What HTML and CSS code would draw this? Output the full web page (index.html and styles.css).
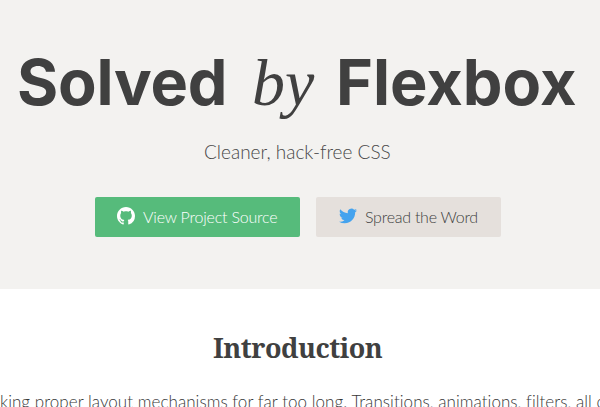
FILE: index.html
```html
<!DOCTYPE html>
<html lang="en">
<head>
<meta charset="utf-8">
<title>Solved by Flexbox</title>
<link rel="stylesheet" href="styles.css">
</head>
<body>
<header class="hero">
  <h1 class="title"><span class="solved">Solved</span><em class="by">by</em><span class="flexbox">Flexbox</span></h1>
  <p class="tagline">Cleaner, hack-free CSS</p>
  <div class="actions">
    <a class="button button-primary"><svg class="icon" viewBox="0 0 16 16" fill="currentColor"><path d="M8 0C3.58 0 0 3.58 0 8c0 3.54 2.29 6.53 5.47 7.59.4.07.55-.17.55-.38 0-.19-.01-.82-.01-1.49-2.01.37-2.53-.49-2.69-.94-.09-.23-.48-.94-.82-1.13-.28-.15-.68-.52-.01-.53.63-.01 1.08.58 1.23.82.72 1.21 1.87.87 2.33.66.07-.52.28-.87.51-1.07-1.78-.2-3.64-.89-3.64-3.95 0-.87.31-1.59.82-2.15-.08-.2-.36-1.02.08-2.12 0 0 .67-.21 2.2.82.64-.18 1.32-.27 2-.27s1.36.09 2 .27c1.53-1.04 2.2-.82 2.2-.82.44 1.1.16 1.92.08 2.12.51.56.82 1.27.82 2.15 0 3.07-1.87 3.75-3.65 3.95.29.25.54.73.54 1.48 0 1.07-.01 1.93-.01 2.2 0 .21.15.46.55.38A8.01 8.01 0 0 0 16 8c0-4.42-3.58-8-8-8z"/></svg><span class="label-source">View Project Source</span></a>
    <a class="button button-secondary"><svg class="icon icon-twitter" viewBox="0 0 24 24" fill="currentColor"><path d="M23.95 4.57a10 10 0 0 1-2.82.77 4.96 4.96 0 0 0 2.16-2.72c-.95.55-2 .95-3.13 1.18a4.92 4.92 0 0 0-8.38 4.48C7.69 8.1 4.07 6.13 1.64 3.16a4.82 4.82 0 0 0-.67 2.48c0 1.71.87 3.21 2.19 4.1a4.9 4.9 0 0 1-2.23-.62v.06a4.92 4.92 0 0 0 3.95 4.83 5 5 0 0 1-2.21.08 4.94 4.94 0 0 0 4.6 3.42A9.87 9.87 0 0 1 0 19.54a14 14 0 0 0 7.55 2.21c9.05 0 14-7.5 14-13.98 0-.21 0-.42-.02-.63a9.94 9.94 0 0 0 2.46-2.55z"/></svg><span class="label-spread">Spread the Word</span></a>
  </div>
</header>
<main class="content">
  <h2 class="heading">Introduction</h2>
  <p class="intro">king proper layout mechanisms for far too long. Transitions, animations, filters, all of</p>
</main>
</body>
</html>
```
FILE: styles.css
```css
body {
  margin: 0;
  height: 407px;
  overflow: hidden;
  background: #fff;
  color: #404040;
  font-family: Lato, "Liberation Sans", sans-serif;
  font-variant-ligatures: none;
}
.hero {
  box-sizing: border-box;
  height: 289px;
  padding-top: 42px;
  background: #f3f2f0;
}
.title {
  display: flex;
  align-items: baseline;
  height: 80px;
  margin: 0;
  padding-left: 17px;
  font-family: Inter, sans-serif;
  font-size: 63px;
  font-weight: 700;
  line-height: 80px;
  white-space: nowrap;
}
.solved { width: 235px; letter-spacing: -0.2px; }
.by {
  width: 84px;
  font-family: "Liberation Serif", serif;
  font-weight: 400;
  font-size: 66px;
}
.tagline {
  height: 28px;
  margin: 16px 0 0;
  padding-left: 204px;
  font-size: 19px;
  font-weight: 300;
  line-height: 28px;
  color: #484848;
  white-space: nowrap;
}
.actions {
  display: flex;
  gap: 16px;
  margin: 31px 0 0 95px;
}
.button {
  display: flex;
  align-items: center;
  box-sizing: border-box;
  height: 40px;
  padding: 0 0 2px 22px;
  border-radius: 2px;
  font-size: 16px;
  font-weight: 300;
  white-space: nowrap;
}
.button-primary { width: 205px; background: #56bb7b; color: #fff; }
.button-secondary { width: 185px; background: #e5e0dc; color: #404040; }
.label-source { letter-spacing: -0.2px; }
.label-spread { letter-spacing: -0.25px; }
.icon { width: 18px; height: 18px; margin-right: 8px; flex: none; }
.icon-twitter { color: #45a3ee; margin-left: 1px; }
.heading {
  height: 40px;
  margin: 39px 0 0;
  padding-left: 213px;
  font-family: "Noto Serif", "DejaVu Serif", serif;
  font-size: 27px;
  font-weight: 700;
  line-height: 40px;
  letter-spacing: -0.5px;
}
.intro {
  margin: 21px 0 0;
  font-size: 17px;
  font-weight: 300;
  line-height: 26px;
  letter-spacing: 0.05px;
  color: #383838;
  white-space: nowrap;
}
```
